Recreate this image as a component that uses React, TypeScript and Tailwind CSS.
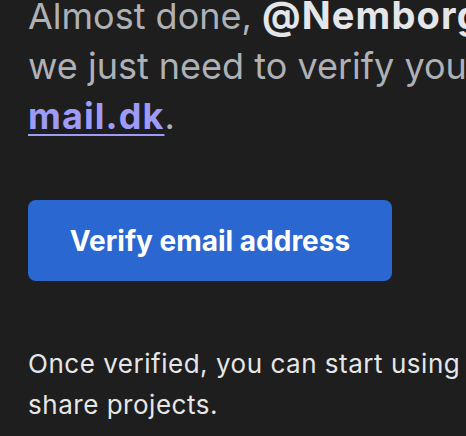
export default function App() {
    return (
        <div className="w-full h-screen bg-[#1e1e1e] overflow-hidden pl-[28px] font-['Inter','Liberation_Sans',sans-serif]">
            <div className="w-[800px]">
                <h1 className="-mt-[10px] text-[36px] leading-[50px] font-normal text-[#aeb1b6] whitespace-nowrap">
                    Almost done, <span className="font-bold text-[38px] tracking-[0.03em] text-[#e4e6e9]">@Nemborg</span>
                    <br />
                    we just need to verify your email,{" "}
                    <a href="#" className="font-bold tracking-[0.03em] text-[#9d9bf7] underline underline-offset-[5px] decoration-2">
                        nemborg@g
                        <br />
                        mail.dk
                    </a>
                    .
                </h1>

                <button className="mt-[59px] w-[364px] h-[81px] rounded-lg bg-[#2a67d1] text-white text-[28px] font-bold">
                    Verify email address
                </button>

                <p className="mt-[62px] text-[26px] tracking-[0.02em] leading-[41px] text-[#e6e6e6] whitespace-nowrap">
                    Once verified, you can start using the app to create and
                    <br />
                    share projects.
                </p>
            </div>
        </div>
    )
}
